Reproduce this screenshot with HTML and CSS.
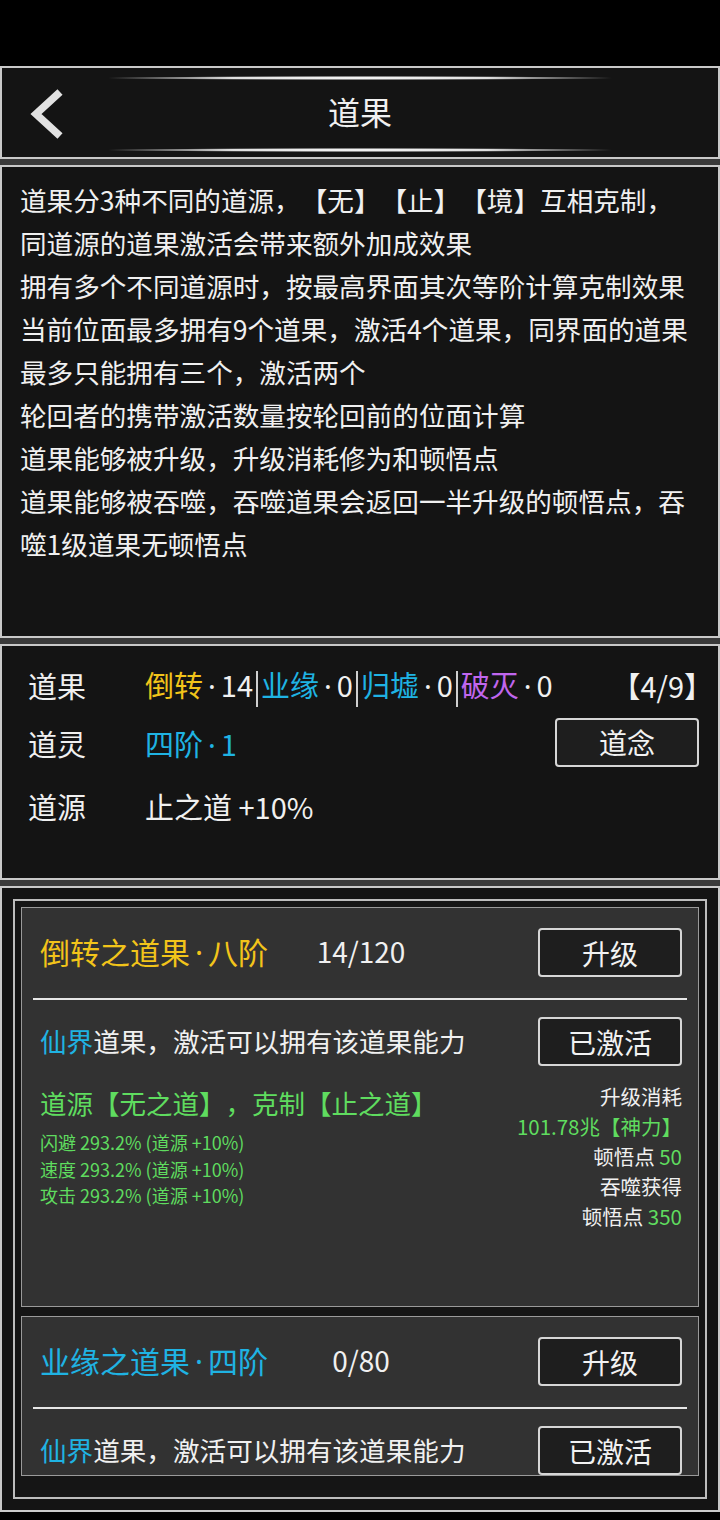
FILE: index.html
```html
<!DOCTYPE html>
<html lang="zh-CN">
<head>
<meta charset="utf-8">
<title>道果</title>
<link rel="stylesheet" href="styles.css">
</head>
<body>
<div class="screen">
  <div class="topbar"></div>
  <div class="stack">
    <header class="panel header">
      <div class="back">
        <svg width="40" height="52" viewBox="0 0 40 52"><polyline points="30,3 6,25 30,47" fill="none" stroke="#e2e2e2" stroke-width="7.5" stroke-linejoin="miter"/></svg>
      </div>
      <div class="title-col">
        <div class="deco"></div>
        <div class="title">道果</div>
        <div class="deco"></div>
      </div>
      <div></div>
    </header>

    <section class="panel desc">
      <div class="line">道果分3种不同的道源，【无】【止】【境】互相克制，</div>
      <div class="line">同道源的道果激活会带来额外加成效果</div>
      <div class="line">拥有多个不同道源时，按最高界面其次等阶计算克制效果</div>
      <div class="line">当前位面最多拥有9个道果，激活4个道果，同界面的道果</div>
      <div class="line">最多只能拥有三个，激活两个</div>
      <div class="line">轮回者的携带激活数量按轮回前的位面计算</div>
      <div class="line">道果能够被升级，升级消耗修为和顿悟点</div>
      <div class="line">道果能够被吞噬，吞噬道果会返回一半升级的顿悟点，吞</div>
      <div class="line">噬1级道果无顿悟点</div>
    </section>

    <section class="panel stats">
      <div class="srow">
        <span class="label">道果</span>
        <span class="value"><span class="gold">倒转</span><span class="dot">·</span>14<i class="sep"></i><span class="cyan">业缘</span><span class="dot">·</span>0<i class="sep"></i><span class="cyan">归墟</span><span class="dot">·</span>0<i class="sep"></i><span class="purple">破灭</span><span class="dot">·</span>0</span>
        <span class="count">【4/9】</span>
      </div>
      <div class="srow">
        <span class="label">道灵</span>
        <span class="value cyan">四阶<span class="dot">·</span>1</span>
        <button class="btn btn-nian">道念</button>
      </div>
      <div class="srow srow-last">
        <span class="label">道源</span>
        <span class="value">止之道 +10%</span>
        <span></span>
      </div>
    </section>

    <section class="panel main">
      <div class="frame">
        <div class="card card-full">
          <div class="crow">
            <span class="ctitle gold">倒转之道果<span class="dot">·</span>八阶</span>
            <span class="cnum">14/120</span>
            <span class="cbtn"><button class="btn">升级</button></span>
          </div>
          <div class="divider"></div>
          <div class="crow2">
            <span class="ctext"><span class="cyan">仙界</span>道果，激活可以拥有该道果能力</span>
            <button class="btn">已激活</button>
          </div>
          <div class="details">
            <div class="dleft">
              <div class="dsrc green">道源【无之道】，克制【止之道】</div>
              <div class="dstat green">闪避 293.2% (道源 +10%)</div>
              <div class="dstat green">速度 293.2% (道源 +10%)</div>
              <div class="dstat green">攻击 293.2% (道源 +10%)</div>
            </div>
            <div class="dright">
              <div>升级消耗</div>
              <div class="green">101.78兆【神力】</div>
              <div>顿悟点 <span class="green">50</span></div>
              <div>吞噬获得</div>
              <div>顿悟点 <span class="green">350</span></div>
            </div>
          </div>
        </div>
        <div class="card">
          <div class="crow">
            <span class="ctitle cyan">业缘之道果<span class="dot">·</span>四阶</span>
            <span class="cnum">0/80</span>
            <span class="cbtn"><button class="btn">升级</button></span>
          </div>
          <div class="divider"></div>
          <div class="crow2">
            <span class="ctext"><span class="cyan">仙界</span>道果，激活可以拥有该道果能力</span>
            <button class="btn">已激活</button>
          </div>
        </div>
      </div>
    </section>
  </div>
</div>
</body>
</html>
```

FILE: styles.css
```css
* { box-sizing: border-box; }
html, body { margin: 0; padding: 0; background: #000; }
body {
  width: 720px;
  height: 1520px;
  overflow: hidden;
  font-family: "Noto Sans CJK SC", "Noto Sans", sans-serif;
  color: #f0f0f0;
  text-spacing-trim: space-all;
}
.topbar { height: 66px; background: #000; }
.stack {
  background: #3a3a3a;
  display: flex;
  flex-direction: column;
  gap: 6px;
}
.panel {
  background: #141414;
  border: 2px solid #c9c9c9;
}
.gold { color: #f2c41a; }
.cyan { color: #1fb3e3; }
.purple { color: #c066ee; }
.green { color: #5fdc5f; }
.dot {
  font-family: "Noto Sans", sans-serif;
  padding: 0 5px;
}

/* header */
.header {
  height: 93px;
  display: grid;
  grid-template-columns: 98px 520px 98px;
}
.back {
  display: flex;
  align-items: center;
  padding-left: 28px;
  padding-top: 4px;
}
.back svg { display: block; }
.title-col {
  display: flex;
  flex-direction: column;
  padding-top: 8px;
}
.deco {
  height: 4px;
  background: radial-gradient(ellipse 50% 50% at 50% 50%, #ffffff 0%, #e0e0e0 55%, rgba(130,130,130,0.6) 85%, rgba(60,60,60,0) 100%);
}
.title {
  height: 68px;
  display: flex;
  align-items: center;
  justify-content: center;
  font-size: 32px;
  padding-bottom: 6px;
}

/* description */
.desc {
  height: 473px;
  padding: 11px 0 0 18px;
  font-size: 26.6px;
  line-height: 43px;
}
.line { white-space: nowrap; }

/* stats */
.stats {
  height: 236px;
  padding: 10px 18px 0 26px;
  font-size: 29px;
}
.srow {
  height: 58px;
  display: grid;
  grid-template-columns: 117px 1fr auto;
  align-items: center;
}
.srow-last { margin-top: 5px; }
.value { white-space: nowrap; }
.sep {
  display: inline-block;
  width: 2px;
  height: 36px;
  background: #cfcfcf;
  vertical-align: middle;
  margin: 0 3px;
}
.count { margin-right: -13px; }
.btn {
  width: 144px;
  height: 49px;
  border: 2px solid #d6d6d6;
  border-radius: 4px;
  background: #1e1e1e;
  color: #f2f2f2;
  font-family: "Noto Sans CJK SC", "Noto Sans", sans-serif;
  font-size: 28px;
  padding: 0;
  display: flex;
  align-items: center;
  justify-content: center;
}
.btn-nian { margin-right: 1px; margin-top: -2px; }

/* main list */
.main {
  height: 626px;
  padding: 11px;
}
.frame {
  height: 600px;
  border: 2px solid #bdbdbd;
  padding: 6px;
  overflow: hidden;
  display: flex;
  flex-direction: column;
  gap: 9px;
  background: #151515;
}
.card {
  flex-shrink: 0;
  background: #323232;
  border: 1px solid #9a9a9a;
  padding: 20px 16px 0 18px;
}
.card-full { height: 400px; }
.crow {
  height: 49px;
  display: grid;
  grid-template-columns: 1fr auto 1fr;
  align-items: center;
}
.ctitle { font-size: 30px; white-space: nowrap; margin-top: -3px; }
.cnum { font-size: 28px; margin-top: -3px; }
.cbtn { display: flex; justify-content: flex-end; }
.divider {
  height: 2px;
  background: #e6e6e6;
  margin: 21px -5px 0 -7px;
}
.crow2 {
  margin-top: 17px;
  height: 49px;
  display: flex;
  align-items: center;
  justify-content: space-between;
}
.ctext { font-size: 26.6px; white-space: nowrap; margin-top: -3px; }
.details {
  margin-top: 15px;
  display: flex;
  justify-content: space-between;
}
.dsrc {
  font-size: 26.5px;
  line-height: 40px;
  margin-top: 2px;
  margin-bottom: 6px;
}
.dstat {
  font-size: 18px;
  line-height: 26.5px;
}
.dright {
  text-align: right;
  font-size: 20.5px;
  line-height: 30px;
}
```
